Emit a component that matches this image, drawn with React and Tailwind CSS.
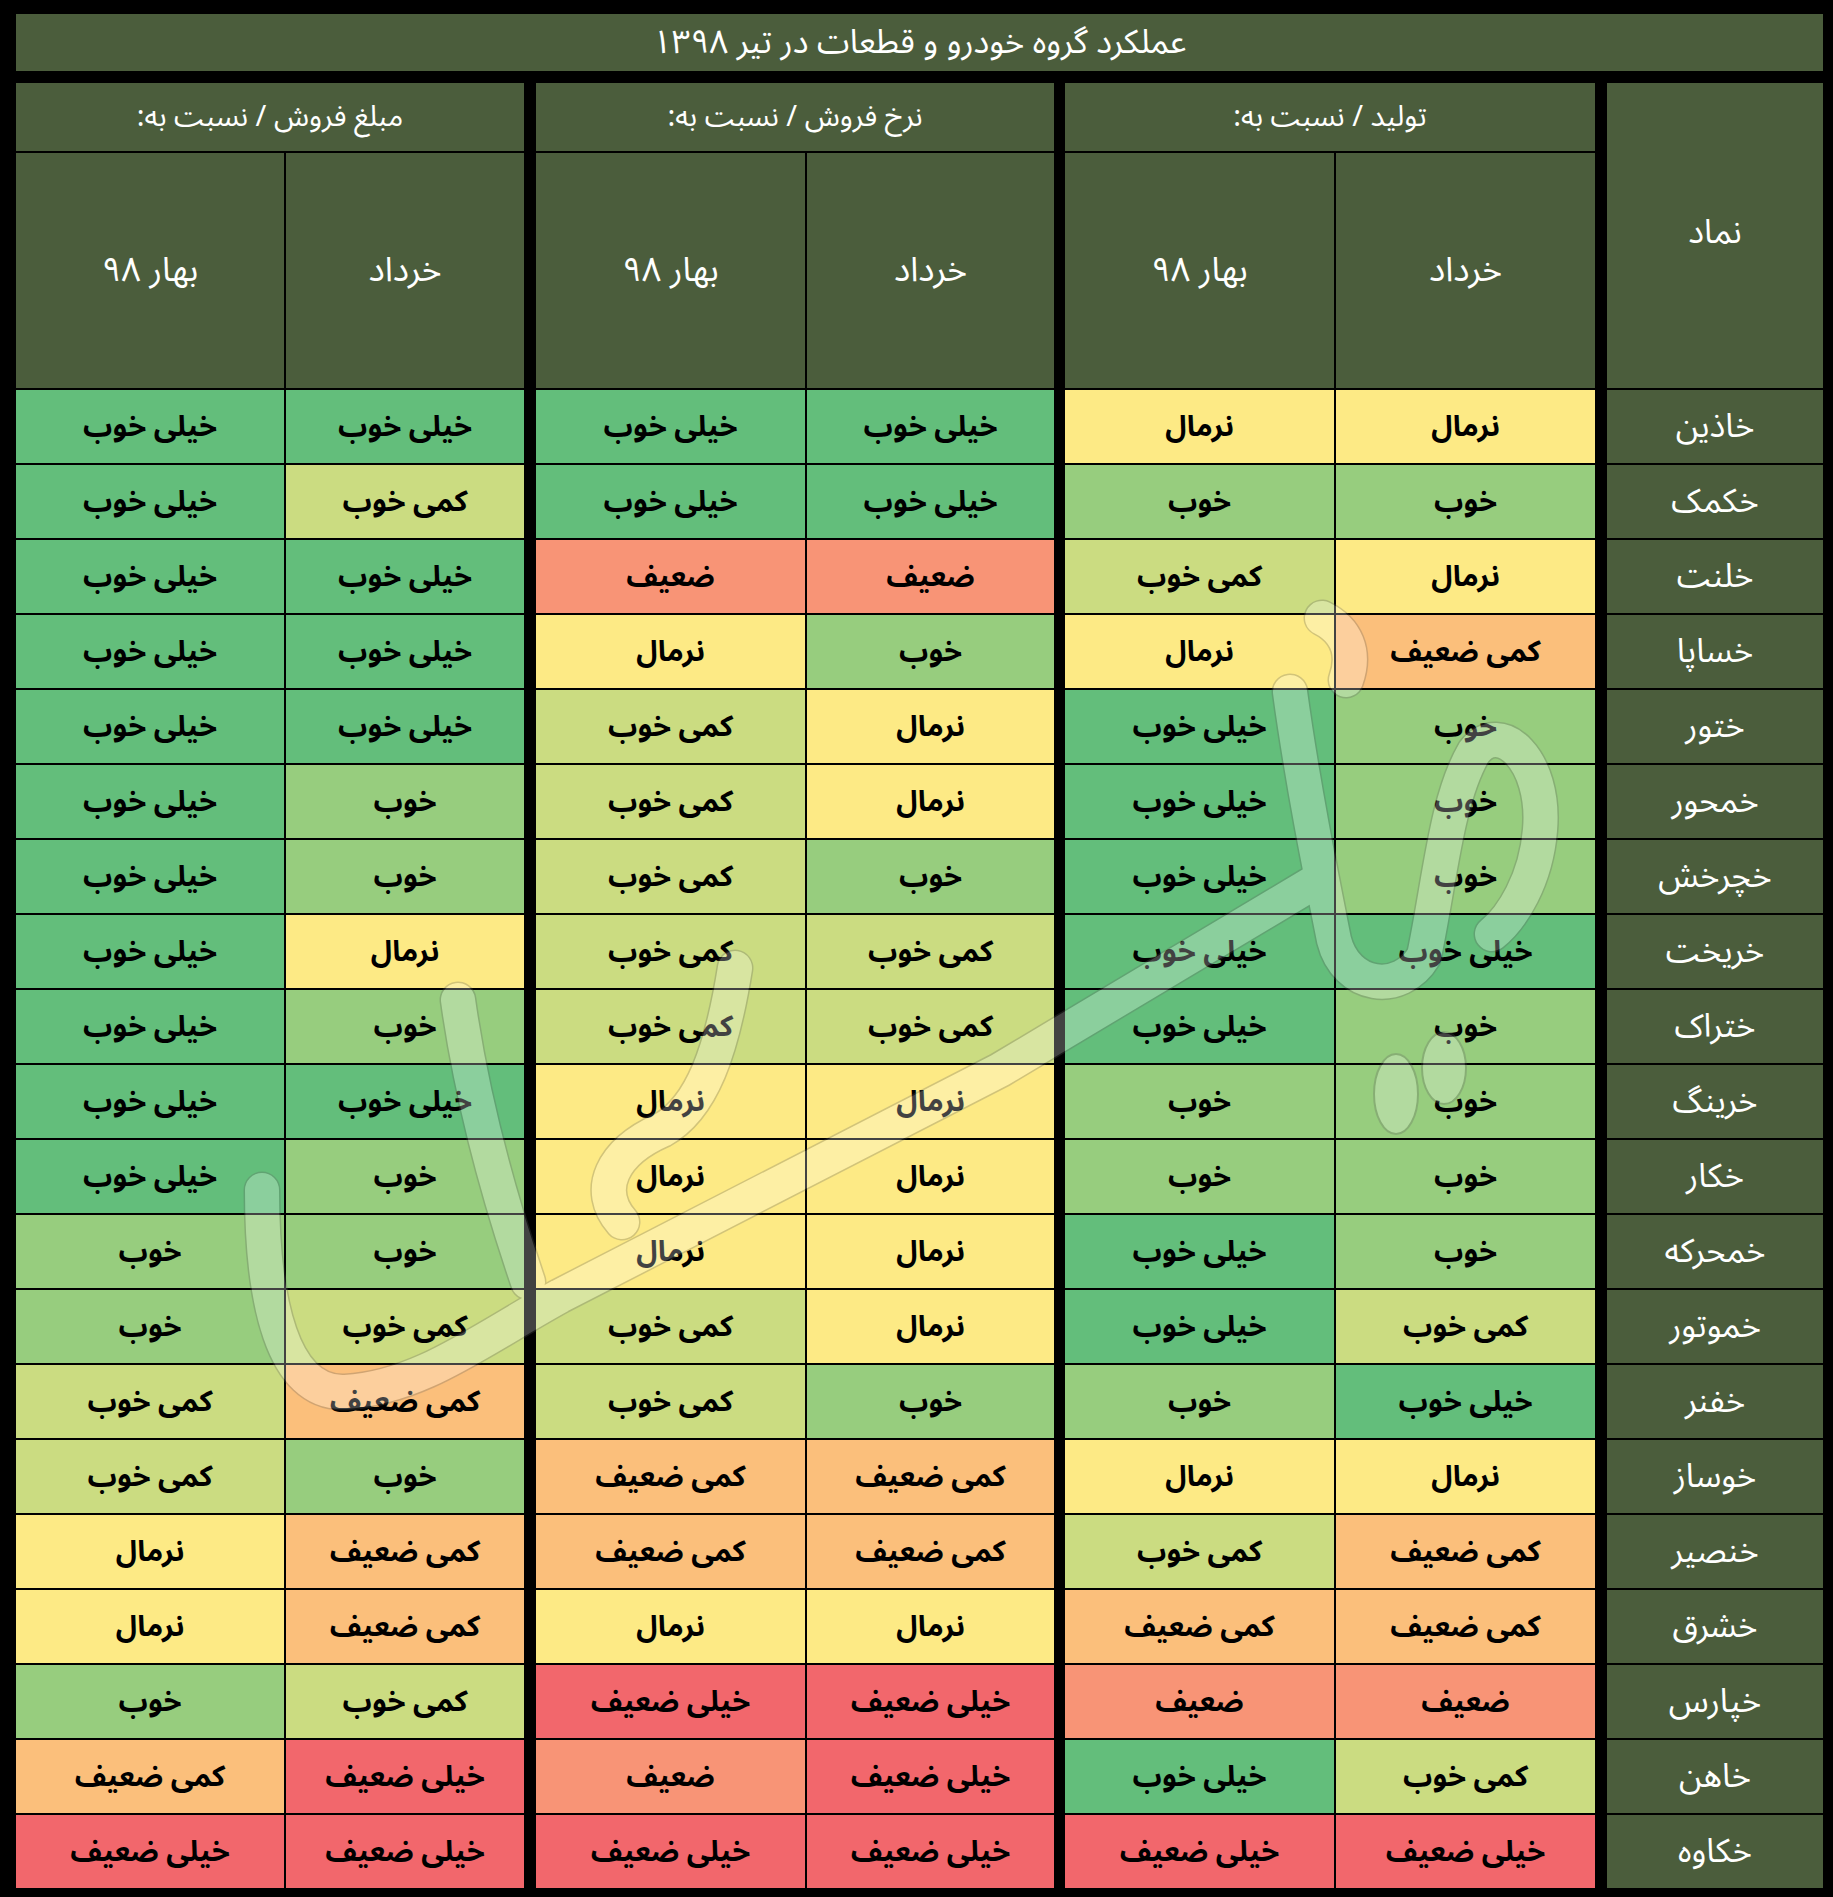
import React from 'react';

const COLORS = {
  'خیلی خوب': 'bg-[#63be7b]',
  'خوب': 'bg-[#97cd7e]',
  'کمی خوب': 'bg-[#cbdc81]',
  'نرمال': 'bg-[#fdea85]',
  'کمی ضعیف': 'bg-[#fbbf7b]',
  'ضعیف': 'bg-[#f89476]',
  'خیلی ضعیف': 'bg-[#f2676c]',
};

// order: تولید خرداد, تولید بهار, نرخ خرداد, نرخ بهار, مبلغ خرداد, مبلغ بهار
const rows = [
  ['خاذین', 'نرمال', 'نرمال', 'خیلی خوب', 'خیلی خوب', 'خیلی خوب', 'خیلی خوب'],
  ['خکمک', 'خوب', 'خوب', 'خیلی خوب', 'خیلی خوب', 'کمی خوب', 'خیلی خوب'],
  ['خلنت', 'نرمال', 'کمی خوب', 'ضعیف', 'ضعیف', 'خیلی خوب', 'خیلی خوب'],
  ['خساپا', 'کمی ضعیف', 'نرمال', 'خوب', 'نرمال', 'خیلی خوب', 'خیلی خوب'],
  ['ختور', 'خوب', 'خیلی خوب', 'نرمال', 'کمی خوب', 'خیلی خوب', 'خیلی خوب'],
  ['خمحور', 'خوب', 'خیلی خوب', 'نرمال', 'کمی خوب', 'خوب', 'خیلی خوب'],
  ['خچرخش', 'خوب', 'خیلی خوب', 'خوب', 'کمی خوب', 'خوب', 'خیلی خوب'],
  ['خریخت', 'خیلی خوب', 'خیلی خوب', 'کمی خوب', 'کمی خوب', 'نرمال', 'خیلی خوب'],
  ['ختراک', 'خوب', 'خیلی خوب', 'کمی خوب', 'کمی خوب', 'خوب', 'خیلی خوب'],
  ['خرینگ', 'خوب', 'خوب', 'نرمال', 'نرمال', 'خیلی خوب', 'خیلی خوب'],
  ['خکار', 'خوب', 'خوب', 'نرمال', 'نرمال', 'خوب', 'خیلی خوب'],
  ['خمحرکه', 'خوب', 'خیلی خوب', 'نرمال', 'نرمال', 'خوب', 'خوب'],
  ['خموتور', 'کمی خوب', 'خیلی خوب', 'نرمال', 'کمی خوب', 'کمی خوب', 'خوب'],
  ['خفنر', 'خیلی خوب', 'خوب', 'خوب', 'کمی خوب', 'کمی ضعیف', 'کمی خوب'],
  ['خوساز', 'نرمال', 'نرمال', 'کمی ضعیف', 'کمی ضعیف', 'خوب', 'کمی خوب'],
  ['خنصیر', 'کمی ضعیف', 'کمی خوب', 'کمی ضعیف', 'کمی ضعیف', 'کمی ضعیف', 'نرمال'],
  ['خشرق', 'کمی ضعیف', 'کمی ضعیف', 'نرمال', 'نرمال', 'کمی ضعیف', 'نرمال'],
  ['خپارس', 'ضعیف', 'ضعیف', 'خیلی ضعیف', 'خیلی ضعیف', 'کمی خوب', 'خوب'],
  ['خاهن', 'کمی خوب', 'خیلی خوب', 'خیلی ضعیف', 'ضعیف', 'خیلی ضعیف', 'کمی ضعیف'],
  ['خکاوه', 'خیلی ضعیف', 'خیلی ضعیف', 'خیلی ضعیف', 'خیلی ضعیف', 'خیلی ضعیف', 'خیلی ضعیف'],
];

const cellCls = [
  'ms-[12px] w-[259px]',
  'ms-[2px] w-[269px]',
  'ms-[11px] w-[247px]',
  'ms-[2px] w-[269px]',
  'ms-[12px] w-[238px]',
  'ms-[2px] w-[268px]',
];

const groups = [
  { title: 'تولید / نسبت به:', cls: 'ms-[12px] w-[530px]', a: 'w-[259px]', b: 'w-[269px]' },
  { title: 'نرخ فروش / نسبت به:', cls: 'ms-[11px] w-[518px]', a: 'w-[247px]', b: 'w-[269px]' },
  { title: 'مبلغ فروش / نسبت به:', cls: 'ms-[12px] w-[508px]', a: 'w-[238px]', b: 'w-[268px]' },
];

const HEAD = 'bg-[#4b5d3c] text-white flex items-center justify-center';

const strokes = [
  'M262 1190 C262 1300 282 1395 345 1392 C420 1388 480 1340 560 1296 L1000 1070 L1318 880',
  'M458 1000 C472 1100 500 1200 528 1282',
  'M735 968 C722 1050 702 1108 662 1130 C612 1152 594 1190 622 1222',
  'M1290 692 C1302 780 1320 870 1334 940 C1346 988 1400 996 1424 956 C1440 880 1446 800 1474 752 C1500 718 1546 760 1540 830 C1536 880 1512 918 1492 934',
  'M1322 618 C1346 630 1356 652 1346 680',
];

// faint logo watermark over the table
const Watermark = () => (
  <svg
    className="absolute inset-0 pointer-events-none"
    width="1833"
    height="1897"
    viewBox="0 0 1833 1897"
    fill="none"
    strokeLinecap="round"
    strokeLinejoin="round"
  >
    <g opacity="0.26">
      <g stroke="#5a5a5a" strokeWidth="37">
        {strokes.map((d, i) => <path key={i} d={d} />)}
      </g>
      <g stroke="#ffffff" strokeWidth="34">
        {strokes.map((d, i) => <path key={i} d={d} />)}
      </g>
      <ellipse cx="1396" cy="1094" rx="22" ry="40" fill="#ffffff" stroke="#5a5a5a" strokeWidth="2" />
      <ellipse cx="1444" cy="1068" rx="22" ry="36" fill="#ffffff" stroke="#5a5a5a" strokeWidth="2" />
    </g>
  </svg>
);

export default function App() {
  return (
    <div
      dir="rtl"
      className="relative w-[1833px] h-[1897px] bg-black pt-[14px] pr-[10px] pl-[16px]"
      style={{ fontFamily: '"Noto Sans Arabic", "DejaVu Sans", sans-serif' }}
    >
      <div className={`${HEAD} h-[57px] text-[33px]`}>عملکرد گروه خودرو و قطعات در تیر ۱۳۹۸</div>

      {/* header */}
      <div className="mt-[12px] flex">
        <div className={`${HEAD} w-[216px] h-[305px] text-[33px] pb-[6px]`}>نماد</div>
        {groups.map((g) => (
          <div key={g.title} className={g.cls}>
            <div className={`${HEAD} h-[68px] text-[29px]`}>{g.title}</div>
            <div className="mt-[2px] flex gap-[2px]">
              <div className={`${HEAD} ${g.a} h-[235px] text-[34px]`}>خرداد</div>
              <div className={`${HEAD} ${g.b} h-[235px] text-[34px]`}>بهار ۹۸</div>
            </div>
          </div>
        ))}
      </div>

      {/* data rows */}
      {rows.map(([sym, ...vals]) => (
        <div key={sym} className="mt-[2px] flex h-[73px]">
          <div className={`${HEAD} w-[216px] text-[33px]`}>{sym}</div>
          {vals.map((v, i) => (
            <div
              key={i}
              className={`${cellCls[i]} ${COLORS[v]} flex items-center justify-center text-[29px] font-bold text-black`}
            >
              {v}
            </div>
          ))}
        </div>
      ))}

      <Watermark />
    </div>
  );
}
